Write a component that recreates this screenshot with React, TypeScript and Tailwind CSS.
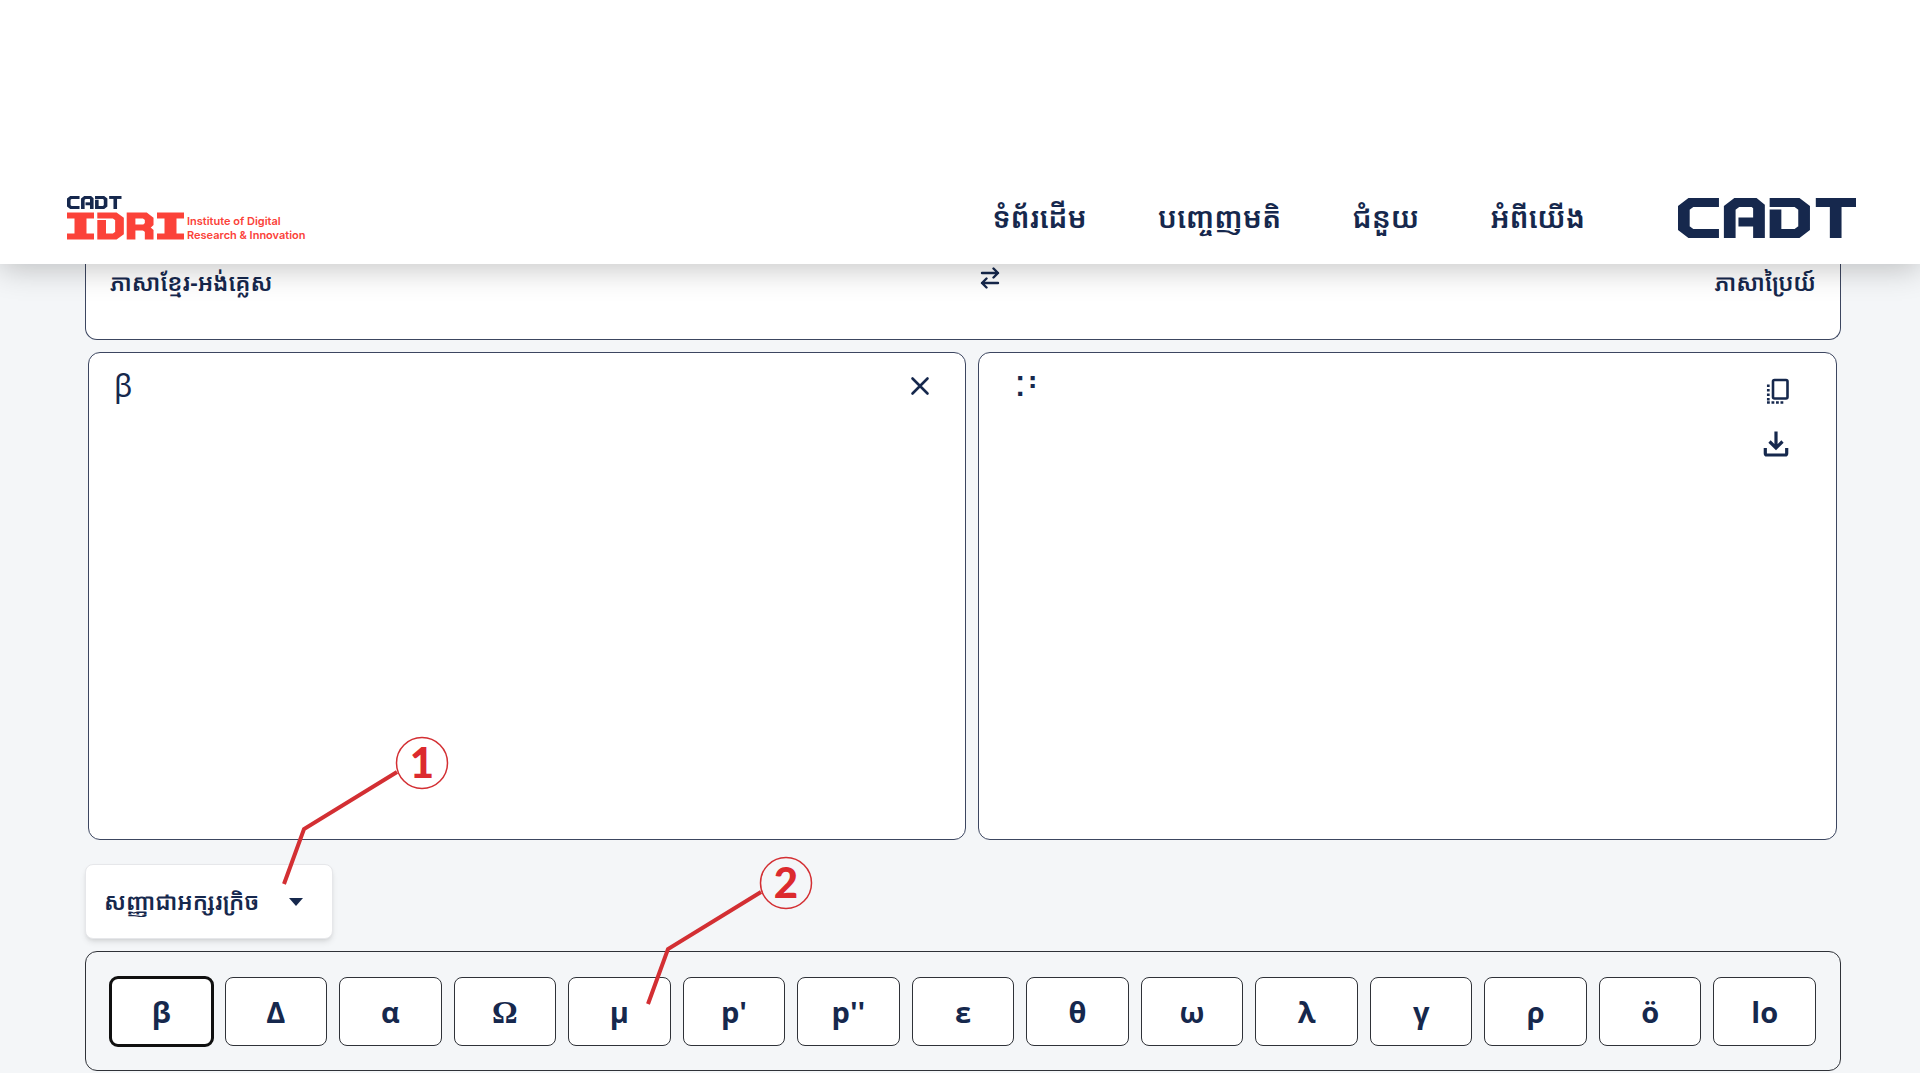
import React from "react";

const khmer = "font-['Noto_Sans_Khmer','Khmer_OS','Noto_Sans',sans-serif]";

const navLinks = ["ទំព័រដើម", "បញ្ចេញមតិ", "ជំនួយ", "អំពីយើង"];

const symbols = ["β", "Δ", "α", "Ω", "μ", "p'", "p''", "ε", "θ", "ω", "λ", "γ", "ρ", "ö", "lo"];

function CadtStrokes() {
  return (
    <g transform="scale(1.3 1)" fill="none" stroke="currentColor" strokeWidth="9">
      <polyline points="31.5,4.5 9.9,4.5 4.5,9.9 4.5,30.1 9.9,35.5 31.5,35.5" />
      <polyline points="39.8,40 39.8,9.9 45.2,4.5 58.5,4.5 62.3,8.5 62.3,40" />
      <line x1="46.5" y1="24" x2="60" y2="24" />
      <polyline points="70.5,4.5 91.6,4.5 97,9.9 97,30.1 91.6,35.5 75,35.5 75,11.5" />
      <line x1="106" y1="4.5" x2="137" y2="4.5" />
      <line x1="121.3" y1="4" x2="121.3" y2="40" />
    </g>
  );
}

function CadtLogo() {
  return (
    <svg viewBox="0 0 178 40" className="h-10 w-[178px] text-[#16284d]" role="img" aria-label="CADT">
      <CadtStrokes />
    </svg>
  );
}

function BarMark({ x }: { x: number }) {
  return (
    <g transform={`translate(${x} 0)`}>
      <line x1="0" y1="19.5" x2="27" y2="19.5" />
      <line x1="0" y1="40.5" x2="27" y2="40.5" />
      <line x1="13.5" y1="19" x2="13.5" y2="41" strokeWidth="12" />
    </g>
  );
}

function IdriLogo() {
  return (
    <svg viewBox="0 0 117 44" className="h-11 w-[117px]" role="img" aria-label="CADT IDRI">
      <g className="text-[#16284d]" transform="scale(0.306 0.325)">
        <CadtStrokes />
      </g>
      <g fill="none" stroke="#fb4239" strokeWidth="6">
        <BarMark x={0} />
        <g transform="translate(30.3 16.5) scale(1.45 1)">
          <polyline points="0,3 12,3 15.3,6.5 15.3,20.5 12,24 3,24 3,7.5" />
        </g>
        <g transform="translate(59.7 16.5) scale(1.45 1)">
          <polyline points="3,27 3,3 12.5,3 15.5,6.3 15.5,11.5 13,15 4,15" />
          <polyline points="12,14 15.5,18.5 15.5,27" />
        </g>
        <BarMark x={90} />
      </g>
    </svg>
  );
}

function SwapIcon() {
  return (
    <svg viewBox="0 0 20 22" className="h-[22px] w-5" fill="none" stroke="currentColor" strokeWidth="2.4" strokeLinecap="round" strokeLinejoin="round" aria-hidden="true">
      <path d="M2 6H18M13.5 1.5L18 6L13.5 10.5" />
      <path d="M18 16H2M6.5 11.5L2 16L6.5 20.5" />
    </svg>
  );
}

function CloseIcon() {
  return (
    <svg viewBox="0 0 20 20" className="size-5" fill="none" stroke="currentColor" strokeWidth="2.6" strokeLinecap="round" aria-hidden="true">
      <path d="M2.5 2.5L17.5 17.5M17.5 2.5L2.5 17.5" />
    </svg>
  );
}

function CopyIcon() {
  return (
    <svg viewBox="0 0 24 28" className="h-7 w-6" fill="none" stroke="currentColor" aria-hidden="true">
      <rect x="8" y="3" width="14.5" height="18.5" rx="1.5" strokeWidth="2.6" />
      <path d="M3.3 7.5V23.5" strokeWidth="2.7" strokeDasharray="2.6 1.9" />
      <path d="M2 25.5H18.5" strokeWidth="2.6" strokeDasharray="2.8 1.7" />
    </svg>
  );
}

function DownloadIcon() {
  return (
    <svg viewBox="0 0 26 26" className="size-[26px]" fill="none" stroke="currentColor" strokeWidth="3.2" aria-hidden="true">
      <path d="M13 0.5V17M6.5 10.5L13 17L19.5 10.5" />
      <path d="M2.3 17V22.5Q2.3 24 3.8 24H22.2Q23.7 24 23.7 22.5V17" />
    </svg>
  );
}

function Callout({ n }: { n: number }) {
  return (
    <svg viewBox="0 0 172 152" className="h-[152px] w-[172px]" fill="none" aria-label={"Step " + n}>
      <path d="M117 37L24 94L4 149" stroke="#d32f33" strokeWidth="4" />
      <circle cx="142" cy="28" r="25.5" stroke="#d32f33" strokeWidth="1.5" />
      <text x="142" y="43" textAnchor="middle" fill="#dc2a2e" className="font-['Lato',sans-serif] text-[42px] font-black">
        {n}
      </text>
    </svg>
  );
}

export default function App() {
  return (
    <div className="bg-white pb-2 font-['Noto_Sans',sans-serif] text-[#16284d]">
      <header className="relative z-10 flex items-center justify-between bg-white pt-[172px] pr-16 pl-[67px] shadow-[0_4px_30px_rgba(0,0,0,0.24)]">
        <a href="#home" className="flex items-center gap-[3px]">
          <IdriLogo />
          <span className="pt-5 font-['Inter',sans-serif] text-[11px] leading-[14px] font-semibold whitespace-nowrap text-[#fb4239]">
            Institute of Digital
            <br />
            Research &amp; Innovation
          </span>
        </a>
        <div className="flex h-[92px] items-center">
          <nav className={`flex gap-[71px] pr-[93px] pb-[2px] text-[29px] leading-10 font-semibold whitespace-nowrap ${khmer}`}>
            {navLinks.map((label) => (
              <a key={label} href="#page">
                {label}
              </a>
            ))}
          </nav>
          <CadtLogo />
        </div>
      </header>

      <main className="bg-[#f4f6f8] pr-[79px] pb-[2px] pl-[85px]">
        <section className={`grid h-[76px] grid-cols-[1fr_auto_1fr] items-start rounded-b-xl border border-t-0 border-[#3c4660] bg-white px-6 text-[23px] leading-8 font-semibold whitespace-nowrap ${khmer}`}>
          <span className="pt-[2px]">ភាសាខ្មែរ-អង់គ្លេស</span>
          <button type="button" aria-label="Swap languages" className="mr-[-27px] ml-[27px] pt-[3px]">
            <SwapIcon />
          </button>
          <span className="pt-[2px] text-right">ភាសាប្រៃយ៍</span>
        </section>

        <section className="mt-3 mr-1 ml-[3px] grid h-[488px] grid-cols-[878fr_859fr] gap-3">
          <div className="flex items-start rounded-xl border border-[#3c4660] bg-white pt-3 pr-[35px] pl-[25px]">
            <textarea aria-label="Source text" defaultValue="β" className="h-[440px] flex-1 resize-none bg-transparent text-[30px] leading-[42px] outline-none" />
            <button type="button" aria-label="Clear" className="mt-[11px]">
              <CloseIcon />
            </button>
          </div>
          <div className="flex items-start justify-between rounded-xl border border-[#3c4660] bg-white pt-3 pr-[47px] pl-[27px]">
            <output aria-label="Braille" className="pt-[3px] font-['DejaVu_Sans',sans-serif] text-[28px] leading-[42px]">⠨⠃</output>
            <div className="flex flex-col items-end gap-[26px] pt-3">
              <button type="button" aria-label="Copy">
                <CopyIcon />
              </button>
              <button type="button" aria-label="Download">
                <DownloadIcon />
              </button>
            </div>
          </div>
        </section>

        <div className="relative mt-6 flex">
          <div className="relative">
            <select
              aria-label="Symbol set"
              className={`h-[75px] w-[248px] appearance-none rounded-lg border border-[#e6e7ea] bg-white pr-14 pl-[18px] text-[23px] font-semibold shadow-md ${khmer}`}
            >
              <option>សញ្ញាជាអក្សរក្រិច</option>
            </select>
            <svg viewBox="0 0 14 8" className="pointer-events-none absolute top-[34px] right-[30px] h-2 w-[14px]" fill="currentColor" aria-hidden="true">
              <path d="M0 0H14L7 8Z" />
            </svg>
          </div>
          <div className="pointer-events-none absolute top-[-129px] left-[195px] z-10">
            <Callout n={1} />
          </div>
          <div className="pointer-events-none absolute top-[-9px] left-[559px] z-10">
            <Callout n={2} />
          </div>
        </div>

        <section className="mt-3 flex gap-3 rounded-xl border border-[#2f3238] px-6 pt-[25px] pb-6">
          {symbols.map((s, i) => (
            <button
              key={s}
              type="button"
              className={`h-[69px] min-w-0 flex-1 rounded-lg border border-[#2f3238] bg-white font-bold ${i === 0 ? "outline-3 -outline-offset-2 outline-[#101010]" : ""} ${s === "Ω" ? "font-['Liberation_Serif',serif] text-[32px]" : "font-['Open_Sans',sans-serif] text-[29px]"}`}
            >
              {s}
            </button>
          ))}
        </section>
      </main>
    </div>
  );
}
